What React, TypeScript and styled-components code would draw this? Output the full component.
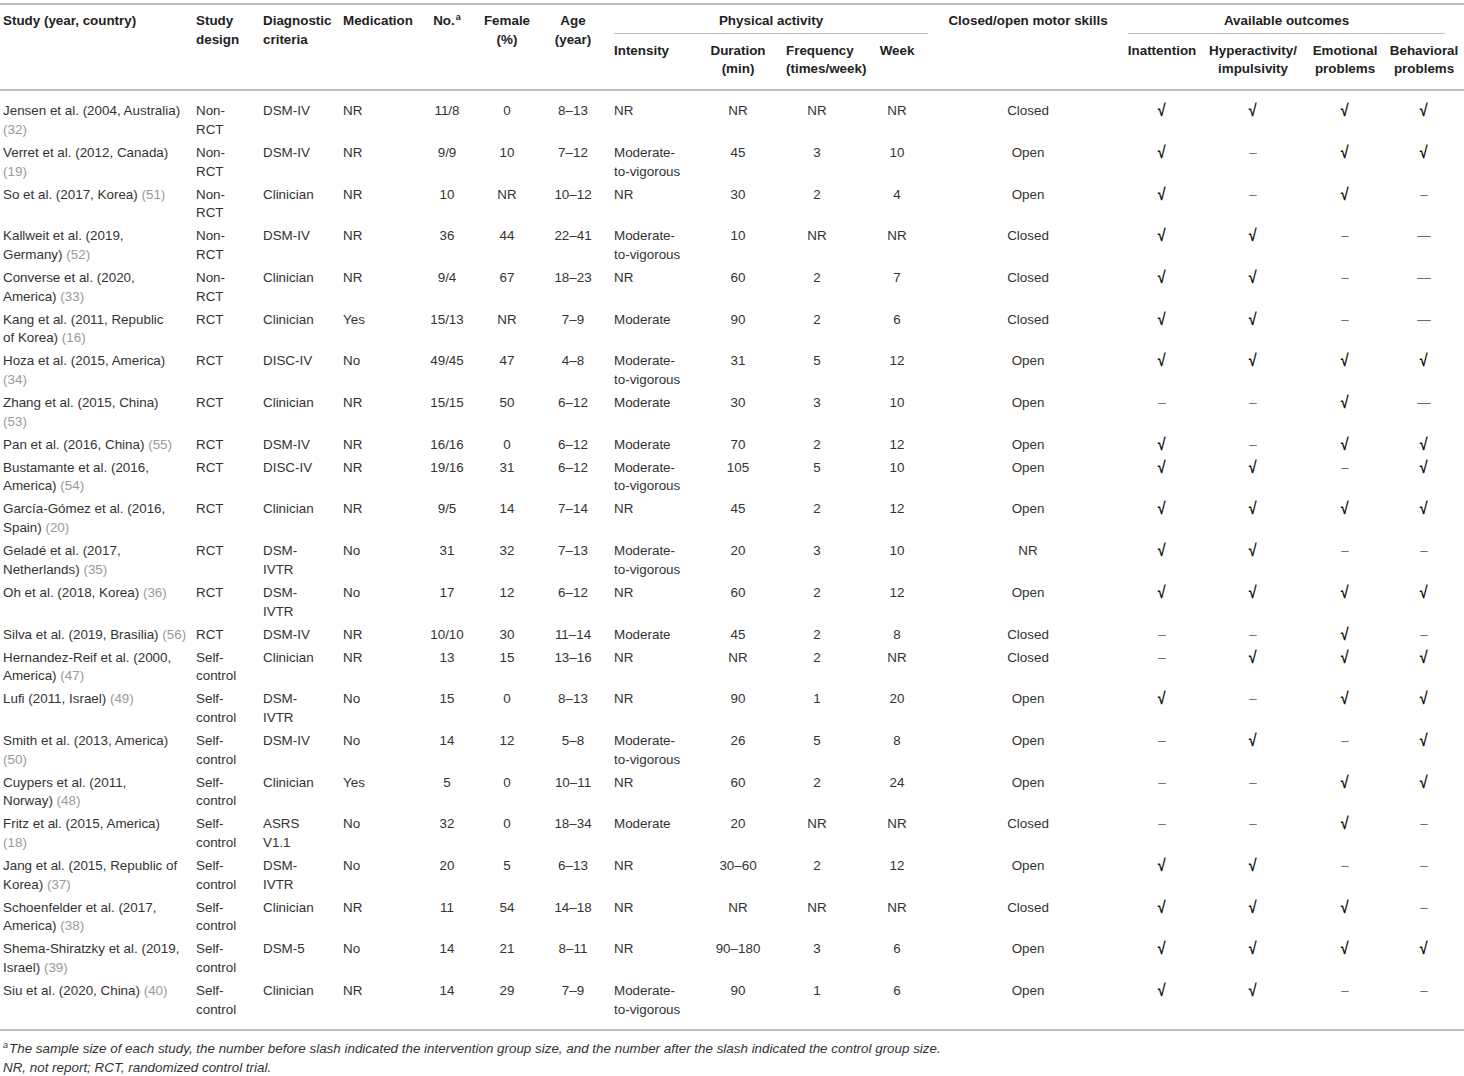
import styled, { createGlobalStyle } from "styled-components";

const GlobalStyle = createGlobalStyle`
    body {
        margin: 0;
        background: #ffffff;
        font-family: "Liberation Sans", Arial, Helvetica, sans-serif;
        color: #333333;
    }
`;

type Align = "left" | "center";

interface Column {
    w: number;
    align: Align;
    pl: number;
    headAlign?: Align;
    headPl?: number;
}

// widths measured off the reference, left to right
const columns: Column[] = [
    { w: 192, align: "left", pl: 3 },
    { w: 67, align: "left", pl: 4 },
    { w: 80, align: "left", pl: 4 },
    { w: 81, align: "left", pl: 4 },
    { w: 54, align: "center", pl: 0 },
    { w: 66, align: "center", pl: 0 },
    { w: 66, align: "center", pl: 0 },
    { w: 98, align: "left", pl: 8 },
    { w: 68, align: "center", pl: 0 },
    { w: 90, align: "center", pl: 0, headAlign: "left", headPl: 14 },
    { w: 70, align: "center", pl: 0 },
    { w: 192, align: "center", pl: 0 },
    { w: 76, align: "center", pl: 0 },
    { w: 106, align: "center", pl: 0 },
    { w: 78, align: "center", pl: 0 },
    { w: 80, align: "center", pl: 0 },
];

type Mark = "y" | "n" | "N";

interface Study {
    name: string;
    ref: string;
    design: string;
    criteria: string;
    medication: string;
    size: string;
    female: string;
    age: string;
    intensity: string;
    duration: string;
    frequency: string;
    week: string;
    skills: string;
    outcomes: Mark[];
}

const NRCT = "Non-\nRCT";
const SELF = "Self-\ncontrol";
const MTV = "Moderate-\nto-vigorous";

const studies: Study[] = [
    { name: "Jensen et al. (2004, Australia)\n", ref: "32", design: NRCT, criteria: "DSM-IV", medication: "NR", size: "11/8", female: "0", age: "8–13", intensity: "NR", duration: "NR", frequency: "NR", week: "NR", skills: "Closed", outcomes: ["y", "y", "y", "y"] },
    { name: "Verret et al. (2012, Canada)\n", ref: "19", design: NRCT, criteria: "DSM-IV", medication: "NR", size: "9/9", female: "10", age: "7–12", intensity: MTV, duration: "45", frequency: "3", week: "10", skills: "Open", outcomes: ["y", "n", "y", "y"] },
    { name: "So et al. (2017, Korea)", ref: "51", design: NRCT, criteria: "Clinician", medication: "NR", size: "10", female: "NR", age: "10–12", intensity: "NR", duration: "30", frequency: "2", week: "4", skills: "Open", outcomes: ["y", "n", "y", "n"] },
    { name: "Kallweit et al. (2019,\nGermany)", ref: "52", design: NRCT, criteria: "DSM-IV", medication: "NR", size: "36", female: "44", age: "22–41", intensity: MTV, duration: "10", frequency: "NR", week: "NR", skills: "Closed", outcomes: ["y", "y", "n", "N"] },
    { name: "Converse et al. (2020,\nAmerica)", ref: "33", design: NRCT, criteria: "Clinician", medication: "NR", size: "9/4", female: "67", age: "18–23", intensity: "NR", duration: "60", frequency: "2", week: "7", skills: "Closed", outcomes: ["y", "y", "n", "N"] },
    { name: "Kang et al. (2011, Republic\nof Korea)", ref: "16", design: "RCT", criteria: "Clinician", medication: "Yes", size: "15/13", female: "NR", age: "7–9", intensity: "Moderate", duration: "90", frequency: "2", week: "6", skills: "Closed", outcomes: ["y", "y", "n", "N"] },
    { name: "Hoza et al. (2015, America)\n", ref: "34", design: "RCT", criteria: "DISC-IV", medication: "No", size: "49/45", female: "47", age: "4–8", intensity: MTV, duration: "31", frequency: "5", week: "12", skills: "Open", outcomes: ["y", "y", "y", "y"] },
    { name: "Zhang et al. (2015, China)\n", ref: "53", design: "RCT", criteria: "Clinician", medication: "NR", size: "15/15", female: "50", age: "6–12", intensity: "Moderate", duration: "30", frequency: "3", week: "10", skills: "Open", outcomes: ["n", "n", "y", "N"] },
    { name: "Pan et al. (2016, China)", ref: "55", design: "RCT", criteria: "DSM-IV", medication: "NR", size: "16/16", female: "0", age: "6–12", intensity: "Moderate", duration: "70", frequency: "2", week: "12", skills: "Open", outcomes: ["y", "n", "y", "y"] },
    { name: "Bustamante et al. (2016,\nAmerica)", ref: "54", design: "RCT", criteria: "DISC-IV", medication: "NR", size: "19/16", female: "31", age: "6–12", intensity: MTV, duration: "105", frequency: "5", week: "10", skills: "Open", outcomes: ["y", "y", "n", "y"] },
    { name: "García-Gómez et al. (2016,\nSpain)", ref: "20", design: "RCT", criteria: "Clinician", medication: "NR", size: "9/5", female: "14", age: "7–14", intensity: "NR", duration: "45", frequency: "2", week: "12", skills: "Open", outcomes: ["y", "y", "y", "y"] },
    { name: "Geladé et al. (2017,\nNetherlands)", ref: "35", design: "RCT", criteria: "DSM-\nIVTR", medication: "No", size: "31", female: "32", age: "7–13", intensity: MTV, duration: "20", frequency: "3", week: "10", skills: "NR", outcomes: ["y", "y", "n", "n"] },
    { name: "Oh et al. (2018, Korea)", ref: "36", design: "RCT", criteria: "DSM-\nIVTR", medication: "No", size: "17", female: "12", age: "6–12", intensity: "NR", duration: "60", frequency: "2", week: "12", skills: "Open", outcomes: ["y", "y", "y", "y"] },
    { name: "Silva et al. (2019, Brasilia)", ref: "56", design: "RCT", criteria: "DSM-IV", medication: "NR", size: "10/10", female: "30", age: "11–14", intensity: "Moderate", duration: "45", frequency: "2", week: "8", skills: "Closed", outcomes: ["n", "n", "y", "n"] },
    { name: "Hernandez-Reif et al. (2000,\nAmerica)", ref: "47", design: SELF, criteria: "Clinician", medication: "NR", size: "13", female: "15", age: "13–16", intensity: "NR", duration: "NR", frequency: "2", week: "NR", skills: "Closed", outcomes: ["n", "y", "y", "y"] },
    { name: "Lufi (2011, Israel)", ref: "49", design: SELF, criteria: "DSM-\nIVTR", medication: "No", size: "15", female: "0", age: "8–13", intensity: "NR", duration: "90", frequency: "1", week: "20", skills: "Open", outcomes: ["y", "n", "y", "y"] },
    { name: "Smith et al. (2013, America)\n", ref: "50", design: SELF, criteria: "DSM-IV", medication: "No", size: "14", female: "12", age: "5–8", intensity: MTV, duration: "26", frequency: "5", week: "8", skills: "Open", outcomes: ["n", "y", "n", "y"] },
    { name: "Cuypers et al. (2011,\nNorway)", ref: "48", design: SELF, criteria: "Clinician", medication: "Yes", size: "5", female: "0", age: "10–11", intensity: "NR", duration: "60", frequency: "2", week: "24", skills: "Open", outcomes: ["n", "n", "y", "y"] },
    { name: "Fritz et al. (2015, America)\n", ref: "18", design: SELF, criteria: "ASRS\nV1.1", medication: "No", size: "32", female: "0", age: "18–34", intensity: "Moderate", duration: "20", frequency: "NR", week: "NR", skills: "Closed", outcomes: ["n", "n", "y", "n"] },
    { name: "Jang et al. (2015, Republic of\nKorea)", ref: "37", design: SELF, criteria: "DSM-\nIVTR", medication: "No", size: "20", female: "5", age: "6–13", intensity: "NR", duration: "30–60", frequency: "2", week: "12", skills: "Open", outcomes: ["y", "y", "n", "n"] },
    { name: "Schoenfelder et al. (2017,\nAmerica)", ref: "38", design: SELF, criteria: "Clinician", medication: "NR", size: "11", female: "54", age: "14–18", intensity: "NR", duration: "NR", frequency: "NR", week: "NR", skills: "Closed", outcomes: ["y", "y", "y", "n"] },
    { name: "Shema-Shiratzky et al. (2019,\nIsrael)", ref: "39", design: SELF, criteria: "DSM-5", medication: "No", size: "14", female: "21", age: "8–11", intensity: "NR", duration: "90–180", frequency: "3", week: "6", skills: "Open", outcomes: ["y", "y", "y", "y"] },
    { name: "Siu et al. (2020, China)", ref: "40", design: SELF, criteria: "Clinician", medication: "NR", size: "14", female: "29", age: "7–9", intensity: MTV, duration: "90", frequency: "1", week: "6", skills: "Open", outcomes: ["y", "y", "n", "n"] },
];

const Page = styled.div`
    width: 1464px;
    padding-top: 3px;
`;

const Table = styled.table`
    width: 1464px;
    table-layout: fixed;
    border-collapse: collapse;
    border-top: 2px solid #bdbdbd;
    font-size: 13.4px;
    line-height: 18.65px;

    thead {
        border-bottom: 2px solid #bdbdbd;
    }

    tbody tr:first-child td {
        padding-top: 11.3px;
    }

    tbody tr:last-child td {
        padding-bottom: 9.5px;
    }
`;

const Col = styled.col<{ $w: number }>`
    width: ${(p) => p.$w}px;
`;

const Th = styled.th<{ $align: Align; $pl: number; $row: 1 | 2 }>`
    font-weight: bold;
    color: #222222;
    text-align: ${(p) => p.$align};
    padding: ${(p) => (p.$row === 1 ? "7px 0 0" : "8px 0 10px")};
    padding-left: ${(p) => p.$pl}px;
    vertical-align: top;
    white-space: pre;
    overflow: visible;

    sup {
        font-size: 9px;
        line-height: 0;
        vertical-align: 5px;
        margin-left: 1px;
    }
`;

const GroupLabel = styled.div<{ $ml: number; $mr: number }>`
    text-align: center;
    border-bottom: 1px solid #bdbdbd;
    padding-bottom: 2px;
    margin: 0 ${(p) => p.$mr}px 0 ${(p) => p.$ml}px;
`;

const Td = styled.td<{ $align: Align; $pl: number }>`
    text-align: ${(p) => p.$align};
    padding: 2.2px 0;
    padding-left: ${(p) => p.$pl}px;
    vertical-align: top;
    white-space: pre-line;
`;

const Ref = styled.span`
    color: #9a9a9a;
`;

// the reference's tick is a heavy radical sign, a bit larger than the text
const Check = styled.span`
    display: inline-block;
    vertical-align: top;
    height: 18.65px;
    color: #111111;
    font-size: 17px;
    font-weight: bold;
    line-height: 18.65px;
    transform: scaleX(0.85);
`;

const Dash = styled.span`
    color: #6a6a6a;
`;

const Footnotes = styled.div`
    border-top: 2px solid #bdbdbd;
    padding: 8px 0 0 3px;
    font-size: 13.4px;
    line-height: 19px;
    font-style: italic;
    color: #333333;

    p {
        margin: 0;
    }

    sup {
        font-size: 9px;
        line-height: 0;
        vertical-align: 5px;
        margin-right: 1px;
    }
`;

const HeadCell = ({ i, row, children, rowSpan }: { i: number; row: 1 | 2; children: React.ReactNode; rowSpan?: number }) => {
    const c = columns[i];
    return (
        <Th $align={c.headAlign ?? c.align} $pl={c.headPl ?? c.pl} $row={row} rowSpan={rowSpan}>
            {children}
        </Th>
    );
};

const Outcome = ({ mark }: { mark: Mark }) => {
    if (mark === "y") return <Check>√</Check>;
    if (mark === "N") return <Dash>—</Dash>;
    return <Dash>–</Dash>;
};

const App = () => {
    return (
        <Page>
            <GlobalStyle />
            <Table>
                <colgroup>
                    {columns.map((c, i) => (
                        <Col key={i} $w={c.w} />
                    ))}
                </colgroup>
                <thead>
                    <tr>
                        <HeadCell i={0} row={1} rowSpan={2}>Study (year, country)</HeadCell>
                        <HeadCell i={1} row={1} rowSpan={2}>{"Study\ndesign"}</HeadCell>
                        <HeadCell i={2} row={1} rowSpan={2}>{"Diagnostic\ncriteria"}</HeadCell>
                        <HeadCell i={3} row={1} rowSpan={2}>Medication</HeadCell>
                        <HeadCell i={4} row={1} rowSpan={2}>
                            No.<sup>a</sup>
                        </HeadCell>
                        <HeadCell i={5} row={1} rowSpan={2}>{"Female\n(%)"}</HeadCell>
                        <HeadCell i={6} row={1} rowSpan={2}>{"Age\n(year)"}</HeadCell>
                        <Th $align="center" $pl={0} $row={1} colSpan={4}>
                            <GroupLabel $ml={8} $mr={4}>Physical activity</GroupLabel>
                        </Th>
                        <HeadCell i={11} row={1} rowSpan={2}>Closed/open motor skills</HeadCell>
                        <Th $align="center" $pl={0} $row={1} colSpan={4}>
                            <GroupLabel $ml={4} $mr={19}>Available outcomes</GroupLabel>
                        </Th>
                    </tr>
                    <tr>
                        <HeadCell i={7} row={2}>Intensity</HeadCell>
                        <HeadCell i={8} row={2}>{"Duration\n(min)"}</HeadCell>
                        <HeadCell i={9} row={2}>{"Frequency\n(times/week)"}</HeadCell>
                        <HeadCell i={10} row={2}>Week</HeadCell>
                        <HeadCell i={12} row={2}>Inattention</HeadCell>
                        <HeadCell i={13} row={2}>{"Hyperactivity/\nimpulsivity"}</HeadCell>
                        <HeadCell i={14} row={2}>{"Emotional\nproblems"}</HeadCell>
                        <HeadCell i={15} row={2}>{"Behavioral\nproblems"}</HeadCell>
                    </tr>
                </thead>
                <tbody>
                    {studies.map((s) => {
                        const cells: React.ReactNode[] = [
                            <>
                                {s.name} <Ref>({s.ref})</Ref>
                            </>,
                            s.design,
                            s.criteria,
                            s.medication,
                            s.size,
                            s.female,
                            s.age,
                            s.intensity,
                            s.duration,
                            s.frequency,
                            s.week,
                            s.skills,
                            ...s.outcomes.map((m, k) => <Outcome key={k} mark={m} />),
                        ];
                        return (
                            <tr key={s.name}>
                                {cells.map((cell, i) => (
                                    <Td key={i} $align={columns[i].align} $pl={columns[i].pl}>
                                        {cell}
                                    </Td>
                                ))}
                            </tr>
                        );
                    })}
                </tbody>
            </Table>
            <Footnotes>
                <p>
                    <sup>a</sup>The sample size of each study, the number before slash indicated the intervention group size, and the number after the slash indicated the control group size.
                </p>
                <p>NR, not report; RCT, randomized control trial.</p>
            </Footnotes>
        </Page>
    );
};

export default App;
